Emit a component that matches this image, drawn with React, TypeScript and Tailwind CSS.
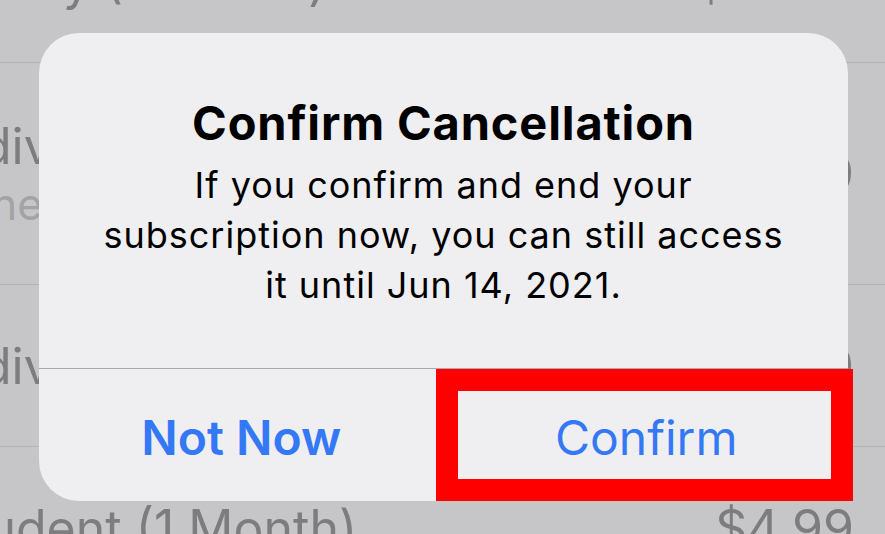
// Confirm Cancellation alert, shown over a dimmed subscription list.

const rows = [
  { title: "Family (1 Month)", price: "$14.99", h: "h-[162px]" },
  { title: "Individual (1 Month)", sub: "Renews Jun 14, 2021", price: "$9.99", h: "h-[222px]" },
  { title: "Individual (1 Year)", price: "$99.00", h: "h-[162px]" },
  { title: "Student (1 Month)", price: "$4.99", h: "h-[162px]" },
];

function ListBehind() {
  return (
    <div className="mt-[-99px] flex flex-col">
      {rows.map((r) => (
        <div
          key={r.title}
          className={`${r.h} flex items-center justify-between border-b border-[#b4b4b7] pr-[31px]`}
        >
          <div className="ml-[-62px] flex flex-col">
            <span className="text-[50px] leading-[50px] text-[#7d7d80]">{r.title}</span>
            {r.sub && (
              <span className="mt-[11px] text-[44px] leading-[44px] text-[#a3a3a6]">{r.sub}</span>
            )}
          </div>
          <span className="text-[50px] leading-[50px] text-[#7d7d80]">{r.price}</span>
        </div>
      ))}
    </div>
  );
}

export default function App() {
  return (
    <div
      className="relative h-[534px] w-[885px] overflow-hidden bg-[#c6c6c8]"
      style={{ fontFamily: "Inter, 'Noto Sans', sans-serif" }}
    >
      <ListBehind />

      {/* alert */}
      <div className="absolute left-[39px] top-[33px] flex h-[468px] w-[809px] flex-col overflow-hidden rounded-[40px] bg-[#efeff1]">
        <div className="flex h-[336px] flex-col items-center border-b border-[#a9a9ad] pt-[66px] text-center text-black">
          <h1 className="text-[47px] font-bold leading-[47px] tracking-[0.85px]">Confirm Cancellation</h1>
          <p className="mt-[14px] text-[36px] leading-[50px] tracking-[1px]">
            If you confirm and end your
            <br />
            subscription now, you can still access
            <br />
            it until Jun 14, 2021.
          </p>
        </div>
        <div className="grid flex-1 grid-cols-2 text-[48px] leading-[48px] text-[#3478f6]">
          <button type="button" className="flex items-center justify-center pt-[6px] font-semibold">
            Not Now
          </button>
          <button
            type="button"
            className="flex items-center justify-center border-l border-[#a9a9ad] pt-[6px]"
          >
            Confirm
          </button>
        </div>
      </div>

      {/* highlight box */}
      <div className="absolute left-[436px] top-[369px] h-[132px] w-[417px] border-[22px] border-[#ff0000]" />
    </div>
  );
}
